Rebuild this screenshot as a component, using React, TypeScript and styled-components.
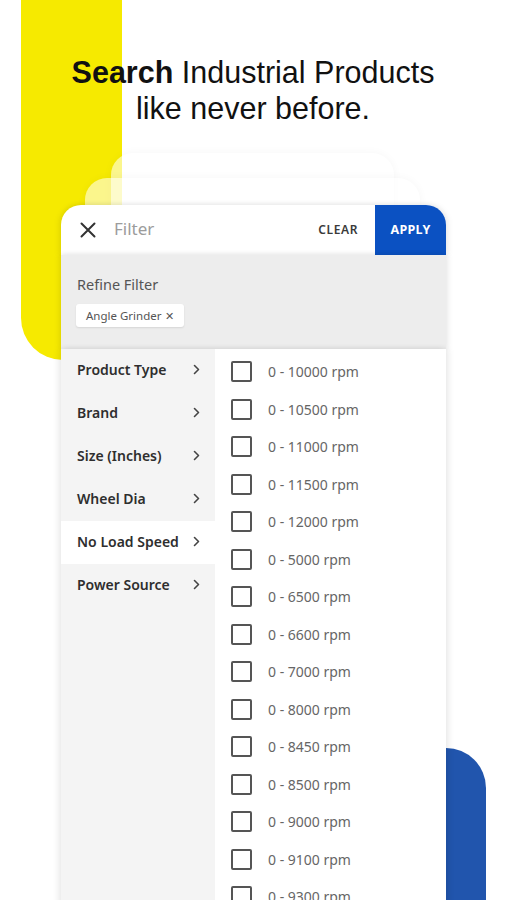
import React, { useState } from "react";
import styled, { createGlobalStyle } from "styled-components";

const GlobalStyle = createGlobalStyle`
  html, body {
    margin: 0;
    padding: 0;
    background: #fff;
  }
  * {
    box-sizing: border-box;
  }
`;

const categories = [
  "Product Type",
  "Brand",
  "Size (Inches)",
  "Wheel Dia",
  "No Load Speed",
  "Power Source",
];

const speeds = [
  "0 - 10000 rpm",
  "0 - 10500 rpm",
  "0 - 11000 rpm",
  "0 - 11500 rpm",
  "0 - 12000 rpm",
  "0 - 5000 rpm",
  "0 - 6500 rpm",
  "0 - 6600 rpm",
  "0 - 7000 rpm",
  "0 - 8000 rpm",
  "0 - 8450 rpm",
  "0 - 8500 rpm",
  "0 - 9000 rpm",
  "0 - 9100 rpm",
  "0 - 9300 rpm",
];

const CloseIcon = () => (
  <svg width="16" height="16" viewBox="0 0 16 16">
    <path
      d="M1.5 1.5l13 13M14.5 1.5l-13 13"
      stroke="#333"
      strokeWidth="2"
      strokeLinecap="round"
    />
  </svg>
);

const Chevron = () => (
  <svg width="7" height="11" viewBox="0 0 7 11">
    <path
      d="M1.5 1.5l4 4-4 4"
      stroke="#444"
      strokeWidth="1.6"
      fill="none"
      strokeLinecap="round"
      strokeLinejoin="round"
    />
  </svg>
);

const App = () => {
  const [active] = useState("No Load Speed");
  const [checked, setChecked] = useState<string[]>([]);

  const toggle = (v: string) => {
    if (checked.includes(v)) {
      setChecked(checked.filter((el) => el !== v));
    } else {
      setChecked([...checked, v]);
    }
  };

  return (
    <>
      <GlobalStyle />
      <Page>
        <YellowBlob />
        <BlueBlob />
        <Headline>
          <b>Search</b> Industrial Products
          <br />
          like never before.
        </Headline>
        <CardArea>
          <Card>
            <Header>
              <CloseBtn>
                <CloseIcon />
              </CloseBtn>
              <HeaderTitle>Filter</HeaderTitle>
              <ClearBtn>CLEAR</ClearBtn>
              <ApplyBtn>APPLY</ApplyBtn>
            </Header>
            {/* refine filter */}
            <Refine>
              <RefineTitle>Refine Filter</RefineTitle>
              <Chip>
                Angle Grinder <ChipX>✕</ChipX>
              </Chip>
            </Refine>
            <Body>
              <Categories>
                {categories.map((c) => (
                  <Category key={c} selected={c === active}>
                    <span>{c}</span>
                    <Chevron />
                  </Category>
                ))}
              </Categories>
              <Options>
                {speeds.map((s) => (
                  <Option key={s} onClick={() => toggle(s)}>
                    <Box checked={checked.includes(s)} />
                    <span>{s}</span>
                  </Option>
                ))}
              </Options>
            </Body>
          </Card>
        </CardArea>
      </Page>
    </>
  );
};

export default App;

const Page = styled.div`
  position: relative;
  width: 506px;
  height: 900px;
  overflow: hidden;
  background: #fff;
`;

const YellowBlob = styled.div`
  position: absolute;
  left: 21px;
  top: 0;
  width: 101px;
  height: 360px;
  background: #f6ea00;
  border-bottom-left-radius: 42px;
`;

const BlueBlob = styled.div`
  position: absolute;
  left: 400px;
  top: 748px;
  width: 86px;
  height: 160px;
  background: #2155ad;
  border-top-right-radius: 40px;
`;

const Headline = styled.h1`
  position: relative;
  margin: 0;
  padding-top: 54px;
  text-align: center;
  font-family: "Liberation Sans", Arial, sans-serif;
  font-weight: 400;
  font-size: 30.5px;
  line-height: 36px;
  color: #111;

  & b {
    font-weight: 700;
  }
`;

const CardArea = styled.div`
  position: relative;
  padding: 79px 0 0 61px;
`;

const Card = styled.div`
  position: relative;
  width: 385px;
  height: 760px;

  &::before,
  &::after {
    content: "";
    position: absolute;
    border-radius: 22px;
    background: rgba(255, 255, 255, 0.55);
    box-shadow: 0 0 10px rgba(0, 0, 0, 0.04);
  }

  &::before {
    left: 50px;
    right: 52px;
    top: -52px;
    height: 200px;
  }

  &::after {
    left: 24px;
    right: 26px;
    top: -27px;
    height: 200px;
  }

  & > * {
    position: relative;
    z-index: 1;
  }
`;

const Header = styled.div`
  display: flex;
  align-items: center;
  height: 50px;
  background: #fff;
  border-radius: 20px 20px 0 0;
  overflow: hidden;
  box-shadow: -2px 0 6px rgba(0, 0, 0, 0.08), 2px 0 6px rgba(0, 0, 0, 0.08);
  font-family: "Noto Sans", "Open Sans", sans-serif;
`;

const CloseBtn = styled.div`
  display: flex;
  align-items: center;
  padding: 0 18px 0 19px;
`;

const HeaderTitle = styled.div`
  flex: 1;
  font-size: 17px;
  color: #9c9c9c;
  margin-top: -3px;
`;

const ClearBtn = styled.div`
  font-size: 12px;
  font-weight: 600;
  letter-spacing: 0.6px;
  color: #3a3a3a;
  margin-right: 17px;
  margin-top: -2px;
`;

const ApplyBtn = styled.div`
  display: flex;
  align-items: center;
  justify-content: center;
  width: 71px;
  height: 100%;
  padding-bottom: 2px;
  background: #0b51c2;
  color: #fff;
  font-size: 12.5px;
  font-weight: 700;
  letter-spacing: 0.3px;
`;

const Refine = styled.div`
  height: 94px;
  background: #ededed;
  padding: 19px 15px 0 15px;
  font-family: "Noto Sans", "Open Sans", sans-serif;
  box-shadow: -2px 0 6px rgba(0, 0, 0, 0.08), 2px 0 6px rgba(0, 0, 0, 0.08);
`;

const RefineTitle = styled.div`
  font-size: 14.5px;
  color: #555;
  line-height: 20px;
  padding-left: 1px;
`;

const Chip = styled.div`
  display: inline-flex;
  align-items: center;
  margin-top: 10px;
  height: 23px;
  padding: 0 10px 0 10px;
  background: #fff;
  border-radius: 3px;
  box-shadow: 0 1px 2px rgba(0, 0, 0, 0.1);
  font-size: 11.5px;
  color: #555;
`;

const ChipX = styled.span`
  margin-left: 4px;
  font-size: 11px;
`;

const Body = styled.div`
  display: flex;
  height: 616px;
  background: #fff;
  font-family: "Noto Sans", "Open Sans", sans-serif;
  box-shadow: -3px 0 6px rgba(0, 0, 0, 0.08), 3px 0 6px rgba(0, 0, 0, 0.08);
`;

const Categories = styled.div`
  width: 154px;
  background: #f4f4f4;
`;

const Category = styled.div<{ selected: boolean }>`
  display: flex;
  align-items: center;
  justify-content: space-between;
  height: 43px;
  padding: 0 15px 2px 16px;
  background: ${(props) => (props.selected ? "#fff" : "transparent")};
  font-size: 14px;
  font-weight: 600;
  color: #2e2e2e;
`;

const Options = styled.div`
  flex: 1;
  padding: 4px 0 0 16px;
`;

const Option = styled.div`
  display: flex;
  align-items: center;
  height: 37.5px;
  font-size: 14px;
  color: #666;
  cursor: pointer;
`;

const Box = styled.div<{ checked: boolean }>`
  width: 21px;
  height: 21px;
  margin-right: 16px;
  border: 2px solid #555;
  border-radius: 2px;
  background: ${(props) => (props.checked ? "#0b51c2" : "#fff")};
`;
